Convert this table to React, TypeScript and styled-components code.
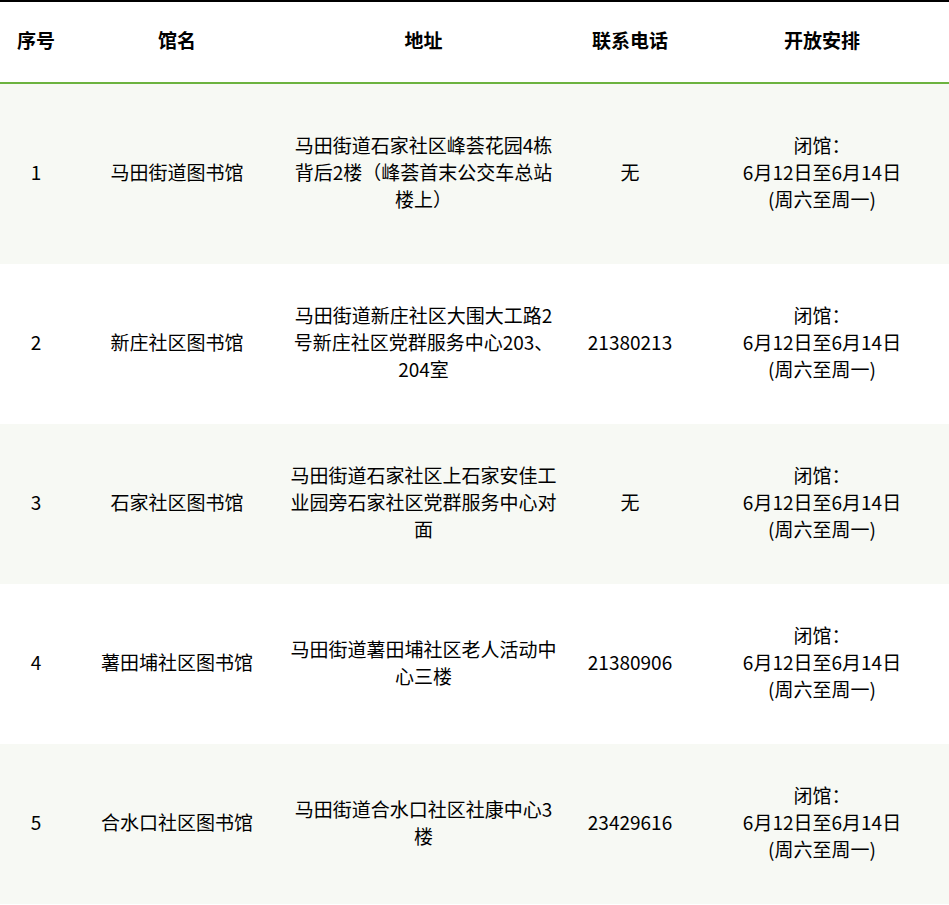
import React from "react";
import styled, { createGlobalStyle } from "styled-components";

const Global = createGlobalStyle`
  html, body { margin: 0; padding: 0; background: #ffffff; }
  body { font-family: "Noto Sans CJK SC", "Noto Sans", sans-serif; color: #000; }
`;

const Table = styled.table`
  width: 949px;
  border-collapse: collapse;
  table-layout: fixed;
  border-top: 2px solid #000;
  font-size: 19px;
  line-height: 27px;
`;

const HeadCell = styled.th<{ $w: number }>`
  width: ${(p) => p.$w}px;
  height: 82px;
  padding: 0 6px 5px;
  box-sizing: border-box;
  font-weight: 700;
  text-align: center;
  vertical-align: middle;
  color: #000;
  border-bottom: 2px solid #6cb33f;
`;

const Row = styled.tr<{ $alt: boolean; $h: number }>`
  height: ${(p) => p.$h}px;
  background: ${(p) => (p.$alt ? "#f7f9f4" : "#ffffff")};
`;

const Cell = styled.td`
  padding: 0 6px 5px;
  text-align: center;
  vertical-align: middle;
  color: #000;
`;

const Line = styled.div``;

type Item = { no: string; name: string; addr: string; tel: string };

const items: Item[] = [
  { no: "1", name: "马田街道图书馆", addr: "马田街道石家社区峰荟花园4栋背后2楼（峰荟首末公交车总站楼上）", tel: "无" },
  { no: "2", name: "新庄社区图书馆", addr: "马田街道新庄社区大围大工路2号新庄社区党群服务中心203、204室", tel: "21380213" },
  { no: "3", name: "石家社区图书馆", addr: "马田街道石家社区上石家安佳工业园旁石家社区党群服务中心对面", tel: "无" },
  { no: "4", name: "薯田埔社区图书馆", addr: "马田街道薯田埔社区老人活动中心三楼", tel: "21380906" },
  { no: "5", name: "合水口社区图书馆", addr: "马田街道合水口社区社康中心3楼", tel: "23429616" },
];

const widths = [72, 210, 283, 130, 254];
const heads = ["序号", "馆名", "地址", "联系电话", "开放安排"];

export default function App() {
  return (
    <>
      <Global />
      <Table>
        <thead>
          <tr>
            {heads.map((h, i) => (
              <HeadCell key={h} $w={widths[i]}>{h}</HeadCell>
            ))}
          </tr>
        </thead>
        <tbody>
          {items.map((it, i) => (
            <Row key={it.no} $alt={i % 2 === 0} $h={i === 0 ? 181 : 160}>
              <Cell>{it.no}</Cell>
              <Cell>{it.name}</Cell>
              <Cell>{it.addr}</Cell>
              <Cell>{it.tel}</Cell>
              <Cell>
                <Line>闭馆：</Line>
                <Line>6月12日至6月14日</Line>
                <Line>(周六至周一)</Line>
              </Cell>
            </Row>
          ))}
        </tbody>
      </Table>
    </>
  );
}
